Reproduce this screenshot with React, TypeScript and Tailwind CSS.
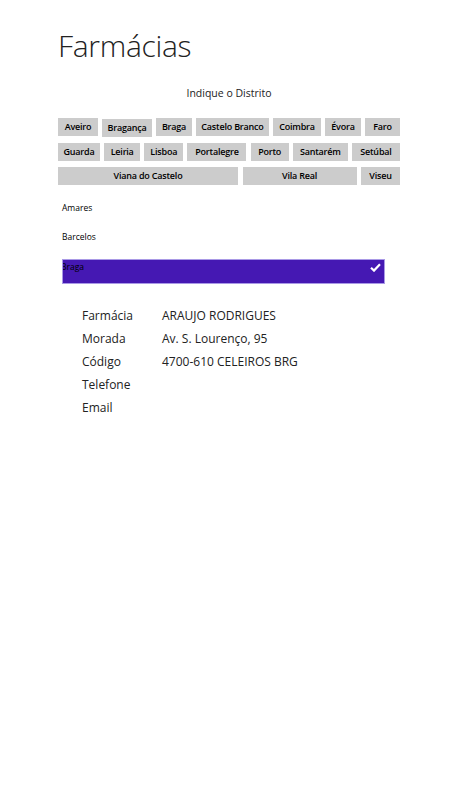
import React from 'react';

const rows: { name: string; w: string }[][] = [
  [
    { name: 'Aveiro', w: 'w-[40px]' },
    { name: 'Bragança', w: 'w-[50px] mt-[1px]' },
    { name: 'Braga', w: 'w-[36px]' },
    { name: 'Castelo Branco', w: 'w-[73px]' },
    { name: 'Coimbra', w: 'w-[48px]' },
    { name: 'Évora', w: 'w-[36px]' },
    { name: 'Faro', w: 'w-[35px]' },
  ],
  [
    { name: 'Guarda', w: 'w-[42px]' },
    { name: 'Leiria', w: 'w-[36px]' },
    { name: 'Lisboa', w: 'w-[39px]' },
    { name: 'Portalegre', w: 'w-[59px]' },
    { name: 'Porto', w: 'w-[38px]' },
    { name: 'Santarém', w: 'w-[55px]' },
    { name: 'Setúbal', w: 'w-[48px]' },
  ],
  [
    { name: 'Viana do Castelo', w: 'w-[180px]' },
    { name: 'Vila Real', w: 'w-[114px]' },
    { name: 'Viseu', w: 'w-[39px]' },
  ],
];

const details = [
  ['Farmácia', 'ARAUJO RODRIGUES'],
  ['Morada', 'Av. S. Lourenço, 95'],
  ['Código', '4700-610 CELEIROS BRG'],
  ['Telefone', ''],
  ['Email', ''],
];

export default function App() {
  return (
    <div className="min-h-[810px] w-[475px] bg-white text-[#222] font-['Open_Sans',_'Noto_Sans',_sans-serif]">
      <div className="pl-[58px] pt-[26px]">
        <h1 className="text-[30px] leading-[40px] font-light tracking-[-0.3px] text-[#222]">Farmácias</h1>

        <div className="w-[342px] text-center text-[10.5px] mt-[19px] leading-[16px]">Indique o Distrito</div>

        <div className="w-[342px] mt-[17px] flex flex-col gap-[6px]">
          {rows.map((row, i) => (
            <div key={i} className="flex justify-between items-start">
              {row.map(b => (
                <button
                  key={b.name}
                  className={`${b.w} h-[18px] bg-[#cccccc] text-[9px] font-semibold text-black leading-[18px] text-center whitespace-nowrap tracking-[-0.2px]`}
                >
                  {b.name}
                </button>
              ))}
            </div>
          ))}
        </div>

        <div className="mt-[13px] pl-[4px] text-[8.5px] leading-[12px] text-black">
          <div className="h-[29px] pt-[4px]">Amares</div>
          <div className="h-[32px] pt-[4px]">Barcelos</div>
          <div className="relative h-[25px] w-[323px] bg-[#4518b3] border border-[#a999e6] overflow-hidden">
            <span className="absolute left-[-2px] top-[1px]">Braga</span>
            <svg className="absolute right-[3px] top-[3px]" width="11" height="9" viewBox="0 0 11 9">
              <path d="M1 4.8 L4 7.6 L10 1.2" stroke="white" strokeWidth="2.2" fill="none" />
            </svg>
          </div>
        </div>

        <div className="mt-[20px] pl-[24px] flex flex-col text-[12px] leading-[23px] text-[#222]">
          {details.map(([k, v]) => (
            <div key={k} className="flex h-[23px]">
              <span className="w-[80px]">{k}</span>
              <span>{v}</span>
            </div>
          ))}
        </div>
      </div>
    </div>
  );
}
